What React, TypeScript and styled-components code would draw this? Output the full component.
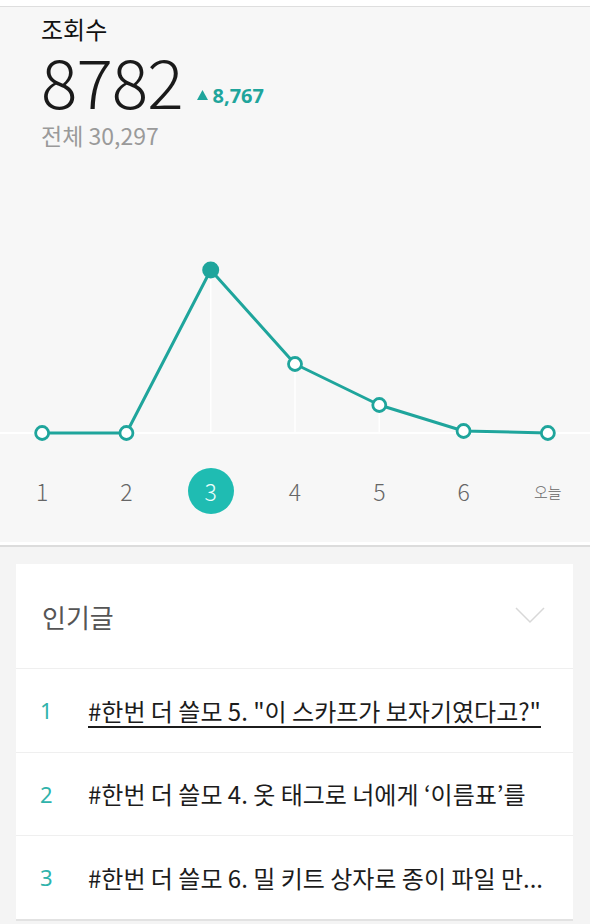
import React from 'react';
import styled, {createGlobalStyle} from 'styled-components';

const TEAL = '#1fa59c';

const GlobalStyle = createGlobalStyle`
  html, body {
    margin: 0;
    padding: 0;
    background: #f4f4f4;
    font-family: "Noto Sans CJK KR", "Noto Sans", sans-serif;
  }
`;

interface Post {
    rank: number;
    title: string;
    underline?: boolean;
}

const days = ['1', '2', '3', '4', '5', '6', '오늘'];
const values = [433, 433, 270, 364, 405, 431, 433];
const selected = 2;

const posts: Post[] = [
    {rank: 1, title: '#한번 더 쓸모 5. "이 스카프가 보자기였다고?"', underline: true},
    {rank: 2, title: '#한번 더 쓸모 4. 옷 태그로 너에게 ‘이름표’를'},
    {rank: 3, title: '#한번 더 쓸모 6. 밀 키트 상자로 종이 파일 만...'},
];

const CHART_TOP = 160;
const colX = (i: number) => 590 / 7 * i + 590 / 14;

const Chart: React.FC = () => {
    const pts = values.map((v, i) => [colX(i), v - CHART_TOP]);
    const d = pts.map(([x, y], i) => `${i ? 'L' : 'M'}${x} ${y}`).join(' ');
    return (
        <ChartSvg width={590} height={300} viewBox="0 0 590 300">
            <line x1={0} y1={273} x2={590} y2={273} stroke="#ffffff" strokeWidth={2}/>
            {pts.slice(2, 5).map(([x, y], i) => (
                <line key={i} x1={x} y1={y} x2={x} y2={273} stroke="#ffffff" strokeWidth={1.5}/>
            ))}
            <path d={d} fill="none" stroke={TEAL} strokeWidth={3} strokeLinejoin="round"/>
            {pts.map(([x, y], i) => i === selected ? (
                <circle key={i} cx={x} cy={y} r={8.5} fill={TEAL}/>
            ) : (
                <circle key={i} cx={x} cy={y} r={6.5} fill="#ffffff" stroke={TEAL} strokeWidth={2.8}/>
            ))}
        </ChartSvg>
    );
};

const App: React.FC = () => {
    return (
        <Page>
            <GlobalStyle/>
            <TopStrip/>
            <StatsSection>
                <Stats>
                    <Label>조회수</Label>
                    <NumberRow>
                        <BigNumber>8782</BigNumber>
                        <Delta>
                            <Triangle viewBox="0 0 10 9" width={11} height={10}>
                                <path d="M5 0 L10 9 L0 9 Z" fill={TEAL}/>
                            </Triangle>
                            8,767
                        </Delta>
                    </NumberRow>
                    <Total>전체 30,297</Total>
                </Stats>
                <Chart/>
                <DayRow>
                    {days.map((day, i) => (
                        <DayCell key={day}>
                            <DayLabel $active={i === selected} $small={day.length > 1}>{day}</DayLabel>
                        </DayCell>
                    ))}
                </DayRow>
            </StatsSection>
            <Card>
                <CardHeader>
                    <CardTitle>인기글</CardTitle>
                    <svg width="30" height="18" viewBox="0 0 30 18">
                        <path d="M1 1 L15 15 L29 1" fill="none" stroke="#d8d8d8" strokeWidth={1.5}/>
                    </svg>
                </CardHeader>
                {posts.map((post) => (
                    <PostRow key={post.rank}>
                        <Rank>{post.rank}</Rank>
                        <PostTitle $underline={post.underline}>{post.title}</PostTitle>
                    </PostRow>
                ))}
            </Card>
        </Page>
    );
};

const Page = styled.div`
  width: 590px;
  min-height: 924px;
  background: #f4f4f4;
  overflow: hidden;
`;

const TopStrip = styled.div`
  height: 6px;
  background: #ffffff;
  border-bottom: 1.5px solid #dedede;
`;

const StatsSection = styled.section`
  background: #f7f7f7;
  border-bottom: 2px solid #dcdcdc;
  box-shadow: inset 0 -3px 0 #ffffff;
  height: 538px;
`;

const Stats = styled.div`
  padding: 7px 0 0 41px;
  height: 145px;
  box-sizing: border-box;
`;

const Label = styled.div`
  font-size: 24px;
  line-height: 30px;
  color: #111;
`;

const NumberRow = styled.div`
  display: flex;
  align-items: baseline;
  gap: 14px;
  margin-top: 6px;
`;

const BigNumber = styled.div`
  font-family: "Noto Sans CJK KR", "Noto Sans", sans-serif;
  font-size: 68px;
  font-weight: 300;
  line-height: 60px;
  letter-spacing: -1px;
  color: #1a1a1a;
`;

const Delta = styled.div`
  display: flex;
  align-items: baseline;
  gap: 5px;
  font-family: "Noto Sans", sans-serif;
  font-size: 20px;
  font-weight: 700;
  color: ${TEAL};
  position: relative;
  top: -6px;
`;

const Triangle = styled.svg`
  position: relative;
  top: -3px;
`;

const Total = styled.div`
  font-size: 23px;
  line-height: 26px;
  color: #9a9a9a;
  margin-top: 7px;
`;

const ChartSvg = styled.svg`
  display: block;
  margin-top: 8px;
`;

const DayRow = styled.div`
  display: grid;
  grid-template-columns: repeat(7, 1fr);
  margin-top: 8px;
`;

const DayCell = styled.div`
  display: flex;
  justify-content: center;
`;

const DayLabel = styled.div<{ $active?: boolean; $small?: boolean }>`
  width: 46px;
  height: 46px;
  border-radius: 50%;
  display: flex;
  align-items: center;
  justify-content: center;
  font-family: "Noto Sans CJK KR", sans-serif;
  font-size: ${p => p.$small ? '15px' : '23px'};
  font-weight: 300;
  color: ${p => p.$active ? '#eafffd' : '#666'};
  background: ${p => p.$active ? '#1fbcb2' : 'transparent'};
`;

const Card = styled.div`
  margin: 17px 17px 0 16px;
  background: #ffffff;
  border-bottom: 2px solid #e2e2e2;
`;

const CardHeader = styled.div`
  height: 104px;
  display: flex;
  align-items: center;
  justify-content: space-between;
  padding: 0 28px 0 26px;
  border-bottom: 1.5px solid #efefef;
`;

const CardTitle = styled.div`
  font-size: 26px;
  color: #555;
  font-weight: 400;
`;

const PostRow = styled.div`
  height: 82.5px;
  display: flex;
  align-items: center;
  padding-left: 24px;
  border-bottom: 1.5px solid #efefef;

  &:last-child {
    border-bottom: none;
  }
`;

const Rank = styled.div`
  width: 48px;
  flex-shrink: 0;
  font-family: "Noto Sans", sans-serif;
  font-size: 22px;
  color: #2fb3ab;
`;

const PostTitle = styled.div<{ $underline?: boolean }>`
  font-size: 24px;
  color: #1c1c1c;
  white-space: nowrap;
  overflow: hidden;
  text-decoration: ${p => p.$underline ? 'underline' : 'none'};
  text-underline-offset: 5px;
  text-decoration-thickness: 2px;
`;

export default App;
